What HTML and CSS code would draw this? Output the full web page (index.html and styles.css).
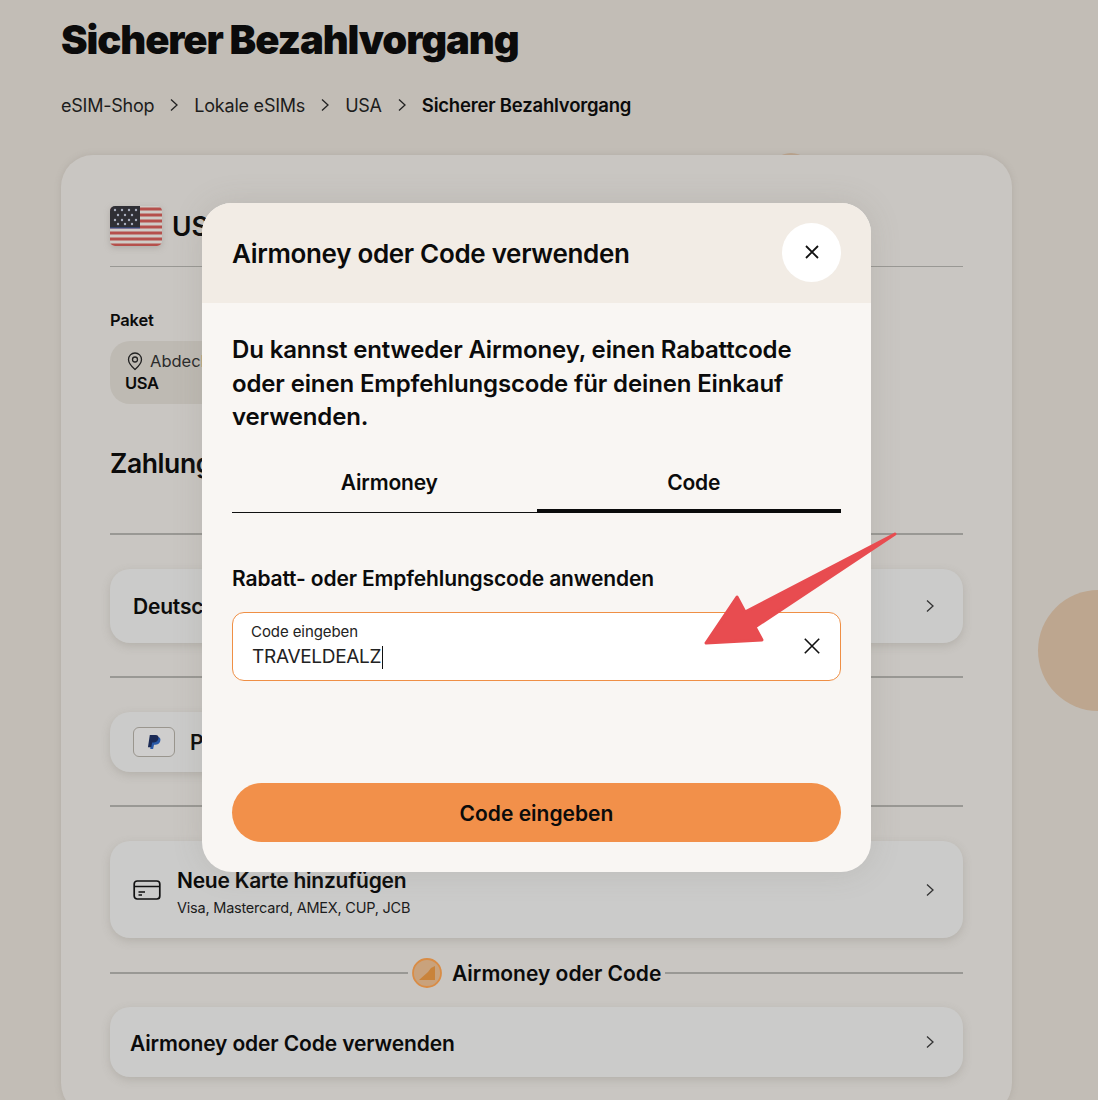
FILE: index.html
```html
<!DOCTYPE html>
<html lang="de">
<head>
<meta charset="utf-8">
<title>Sicherer Bezahlvorgang</title>
<link rel="stylesheet" href="styles.css">
</head>
<body>
<div class="blob"></div>
<div class="blob-top"></div>
<main class="page">
  <h1 class="title">Sicherer Bezahlvorgang</h1>
  <nav class="crumbs">
    <span>eSIM-Shop</span>
    <svg class="crumb-sep" viewBox="0 0 10 14"><path d="M2 1.500 8 7l-6 5.500"/></svg>
    <span>Lokale eSIMs</span>
    <svg class="crumb-sep" viewBox="0 0 10 14"><path d="M2 1.500 8 7l-6 5.500"/></svg>
    <span>USA</span>
    <svg class="crumb-sep" viewBox="0 0 10 14"><path d="M2 1.500 8 7l-6 5.500"/></svg>
    <strong>Sicherer Bezahlvorgang</strong>
  </nav>
  <section class="card">
    <div class="head-row">
      <svg class="flag" viewBox="0 0 52 40">
        <defs><clipPath id="fc"><rect width="52" height="40" rx="5"/></clipPath></defs>
        <g clip-path="url(#fc)">
          <rect width="52" height="40" fill="#cfccc7"/>
          <path d="M0 3h52M0 9h52M0 15h52M0 21h52M0 27h52M0 33h52M0 39h52" stroke="#b5504c" stroke-width="3"/>
          <rect width="30" height="22" fill="#2f2f35"/>
          <path d="M0 22h30" stroke="#3b5ca8" stroke-width="1"/>
          <g fill="#aab0c0">
            <circle cx="5" cy="4" r="1.200"/><circle cx="12" cy="4" r="1.200"/><circle cx="19" cy="4" r="1.200"/><circle cx="26" cy="4" r="1.200"/>
            <circle cx="8" cy="9" r="1.200"/><circle cx="15" cy="9" r="1.200"/><circle cx="22" cy="9" r="1.200"/>
            <circle cx="5" cy="14" r="1.200"/><circle cx="12" cy="14" r="1.200"/><circle cx="19" cy="14" r="1.200"/><circle cx="26" cy="14" r="1.200"/>
            <circle cx="8" cy="18" r="1.200"/><circle cx="15" cy="18" r="1.200"/><circle cx="22" cy="18" r="1.200"/>
          </g>
        </g>
      </svg>
      <span class="head-name">USA</span>
    </div>
    <hr class="rule head-rule">
    <div class="paket-label">Paket</div>
    <div class="pill">
      <div class="pill-top">
        <svg class="pin" viewBox="0 0 18 20"><path d="M9 18.500C5 15 2.500 11.800 2.500 8.500a6.500 6.500 0 0 1 13 0c0 3.300-2.500 6.500-6.500 10Z"/><circle cx="9" cy="8.500" r="2.500"/></svg>
        <span>Abdeckung</span>
      </div>
      <strong>USA</strong>
    </div>
    <h2 class="pay-title">Zahlungsmethode</h2>
    <hr class="rule pay-rule">
    <div class="row row-de"><strong class="row-strong">Deutsche Kreditkarte</strong>
      <svg class="chev" viewBox="0 0 10 14"><path d="M2 1.500 8 7l-6 5.500"/></svg></div>
    <hr class="rule gap-rule">
    <div class="row row-pp">
      <span class="pp-box">
        <svg viewBox="0 0 16 18" class="pp"><path fill="#2a5aa8" d="M5 3h6c3 0 4 2 3 5-.8 2.500-3 3.500-5 3.500H7.500L6.500 16H3.500Z"/><path fill="#1b2a55" d="M3 1h6c3 0 4 2 3 4.500C11.200 8 9 9 7 9H5.500L4.500 14H1Z"/></svg>
      </span>
      <strong class="row-strong">PayPal</strong>
    </div>
    <hr class="rule gap-rule">
    <div class="row row-card">
      <svg class="cc" viewBox="0 0 28 22"><rect x="1.200" y="2" width="25.600" height="18" rx="3"/><path d="M1.200 7.500h25.600M5.500 13h6.500M5.500 16h3.500"/></svg>
      <div class="card-text">
        <strong class="card-title">Neue Karte hinzufügen</strong>
        <div class="card-sub">Visa, Mastercard, AMEX, CUP, JCB</div>
      </div>
      <svg class="chev" viewBox="0 0 10 14"><path d="M2 1.500 8 7l-6 5.500"/></svg>
    </div>
    <div class="divider">
      <span class="divider-line"></span>
      <svg class="coin" viewBox="0 0 30 30"><circle cx="15" cy="15" r="14" fill="#c9a27c" stroke="#d98c45" stroke-width="1.800"/><path d="M7 22 16 14 19 10 23 8v14Z" fill="#c9833a"/></svg>
      <strong class="divider-text">Airmoney oder Code</strong>
      <span class="divider-line short"></span>
    </div>
    <div class="row row-air"><strong class="air-text">Airmoney oder Code verwenden</strong>
      <svg class="chev" viewBox="0 0 10 14"><path d="M2 1.500 8 7l-6 5.500"/></svg></div>
  </section>
</main>

<div class="modal">
  <header class="modal-head">
    <h2>Airmoney oder Code verwenden</h2>
    <button class="close"><svg viewBox="0 0 16 16"><path d="M2 2l12 12M14 2 2 14"/></svg></button>
  </header>
  <div class="modal-body">
    <p class="lead">Du kannst entweder Airmoney, einen Rabattcode oder einen Empfehlungscode für deinen Einkauf verwenden.</p>
    <div class="tabs">
      <div class="tab">Airmoney</div>
      <div class="tab active">Code</div>
    </div>
    <div class="field-title">Rabatt- oder Empfehlungscode anwenden</div>
    <div class="field">
      <div class="field-inner">
        <div class="field-label">Code eingeben</div>
        <div class="field-value">TRAVELDEALZ<span class="caret"></span></div>
      </div>
      <svg class="clear" viewBox="0 0 20 20"><path d="M2 2l16 16M18 2 2 18"/></svg>
    </div>
    <button class="submit">Code eingeben</button>
  </div>
</div>

<svg class="arrow" viewBox="0 0 1098 1100"><path d="M895 534 745 612 737 597 706 643 762 640 755 627Z" fill="#e84c50" stroke="#e84c50" stroke-width="3" stroke-linejoin="round"/></svg>
</body>
</html>
```
FILE: styles.css
```css
* { box-sizing: border-box; }
html, body { margin: 0; height: 1100px; overflow: hidden; }
body {
  background: #c2bdb6;
  font-family: Inter, "Liberation Sans", sans-serif;
  color: #0b0b0b;
  position: relative;
}
.blob {
  position: absolute;
  left: 1038px;
  top: 590px;
  width: 121px;
  height: 121px;
  border-radius: 50%;
  background: #bda68f;
}
.blob-top {
  position: absolute;
  left: 770px;
  top: 153px;
  width: 42px;
  height: 42px;
  border-radius: 50%;
  background: #bda68f;
}
.page { padding: 14px 0 0 61px; width: 1098px; position: relative; }
.title {
  margin: 0;
  font-size: 40px;
  line-height: 52px;
  font-weight: 900;
  letter-spacing: -1.1px;
}
.crumbs {
  display: flex;
  align-items: center;
  margin-top: 26px;
  height: 26px;
  font-size: 18px;
  letter-spacing: -0.23px;
  color: #1c1c1c;
}
.crumbs strong { font-size: 18.500px; letter-spacing: -0.2px; font-weight: 600; color: #0b0b0b; }
.crumb-sep {
  width: 10px;
  height: 14px;
  margin: 0 15px;
  fill: none;
  stroke: #222;
  stroke-width: 1.300;
}
.card {
  margin-top: 37px;
  background: #c9c6c2;
  border-radius: 32px;
  padding: 49px 49px 0;
  height: 960px;
  width: 951px;
  box-shadow: 0 0 6px rgba(130, 125, 115, 0.25);
}
.head-row { display: flex; align-items: center; height: 43px; gap: 10px; }
.flag { width: 52px; height: 40px; filter: drop-shadow(0 2px 3px rgba(120, 114, 105, 0.3)); }
.head-name { font-size: 26.500px; font-weight: 600; }
.rule { border: 0; height: 2px; background: #999894; margin: 0; }
.head-rule { height: 1px; margin-top: 19px; }
.paket-label { margin-top: 43px; font-size: 16.500px; font-weight: 600; line-height: 20px; letter-spacing: -0.2px; }
.pill {
  margin-top: 11px;
  width: 93px;
  height: 63px;
  overflow: hidden;
  border-radius: 20px 0 0 20px;
  background: #bebab3;
  padding: 9px 0 9px 15px;
  font-size: 16.500px;
}
.pill-top { display: flex; align-items: center; gap: 6px; margin-left: 1px; color: #2b2b2b; height: 21px; white-space: nowrap; }
.pill strong { font-weight: 600; display: block; line-height: 25px; letter-spacing: -0.3px; }
.pin { width: 18px; height: 20px; fill: none; stroke: #222; stroke-width: 1.300; flex: none; }
.pay-title { margin: 41px 0 0; font-size: 26.500px; line-height: 36px; font-weight: 600; letter-spacing: -0.4px; }
.pay-rule { margin-top: 52px; }
.gap-rule { margin-top: 33px; }
.row {
  display: flex;
  align-items: center;
  background: #cbcbca;
  border-radius: 20px;
  box-shadow: 0 3px 8px rgba(120, 114, 105, 0.25);
}
.row-de { margin-top: 34px; height: 74px; padding: 0 28px 0 23px; justify-content: space-between; }
.row-pp { margin-top: 34px; height: 60px; width: 400px; padding: 0 23px; gap: 15px; }
.row-card { margin-top: 34px; height: 97px; padding: 0 28px 0 23px; gap: 16px; }
.card-text { flex: 1; padding-top: 6px; }
.row-air { margin-top: 17px; height: 70px; padding: 0 28px 0 20px; justify-content: space-between; }
.row-strong { font-size: 21px; font-weight: 600; letter-spacing: -0.2px; }
.pp-box {
  width: 42px;
  height: 30px;
  border: 1px solid #9a968e;
  border-radius: 6px;
  display: flex;
  align-items: center;
  justify-content: center;
  background: #cfcecd;
}
.pp { width: 15px; height: 17px; }
.cc { width: 28px; height: 22px; fill: none; stroke: #111; stroke-width: 1.700; flex: none; }
.card-title { display: block; font-size: 21px; font-weight: 600; line-height: 28px; letter-spacing: -0.26px; }
.card-sub { font-size: 14.500px; line-height: 22px; margin-top: 2px; letter-spacing: -0.22px; color: #1c1c1c; }
.chev { width: 10px; height: 14px; fill: none; stroke: #333; stroke-width: 1.300; flex: none; }
.divider { display: flex; align-items: center; margin-top: 17px; height: 35px; }
.divider-line { flex: 1; height: 2px; background: #999894; }
.divider-line.short { flex: 0 0 298px; margin-left: 4px; }
.coin { width: 30px; height: 30px; margin: 0 10px 0 4px; flex: none; }
.divider-text { font-size: 21px; line-height: 30px; padding-top: 3px; font-weight: 600; white-space: nowrap; width: 209px; }
.air-text { font-size: 21px; line-height: 30px; padding-top: 3px; font-weight: 600; letter-spacing: -0.13px; }

.modal {
  position: absolute;
  left: 202px;
  top: 203px;
  width: 669px;
  height: 669px;
  border-radius: 30px;
  overflow: hidden;
  background: #f9f6f3;
  box-shadow: 0 0 30px rgba(120, 114, 105, 0.18);
}
.modal-head {
  height: 100px;
  background: #f2ece5;
  display: flex;
  align-items: center;
  justify-content: space-between;
  padding: 0 30px;
}
.modal-head h2 { margin: 0; padding-top: 1px; font-size: 26px; font-weight: 600; letter-spacing: -0.32px; }
.close {
  width: 59px;
  height: 59px;
  margin-bottom: 2px;
  border: 0;
  border-radius: 50%;
  background: #fff;
  display: flex;
  align-items: center;
  justify-content: center;
  padding: 0;
}
.close svg { width: 16px; height: 16px; fill: none; stroke: #111; stroke-width: 1.800; }
.modal-body { padding: 30px 30px 0; }
.lead { margin: 0; font-size: 24px; line-height: 33.500px; font-weight: 600; letter-spacing: -0.14px; }
.tabs { display: flex; margin-top: 16px; }
.tab {
  flex: 1;
  height: 63px;
  padding: 18px 0 0 10px;
  text-align: center;
  font-size: 21px;
  line-height: 30px;
  font-weight: 600;
  letter-spacing: -0.15px;
  border-bottom: 1px solid #111;
}
.tab.active { border-bottom: 4px solid #0b0b0b; }
.field-title { margin-top: 51px; font-size: 21px; line-height: 30px; font-weight: 600; letter-spacing: -0.14px; }
.field {
  margin-top: 18px;
  height: 69px;
  background: #fff;
  border: 1px solid #ef8f45;
  border-radius: 12px;
  display: flex;
  align-items: center;
  justify-content: space-between;
  padding: 0 19px 0 18px;
}
.field-label { font-size: 15px; line-height: 20px; letter-spacing: -0.08px; color: #222; }
.field-value { font-size: 19px; line-height: 26px; color: #222; letter-spacing: -0.3px; margin-top: 2px; padding-left: 1px; display: flex; align-items: center; }
.caret { width: 1px; height: 23px; background: #111; margin-left: 1px; }
.clear { width: 18px; height: 18px; fill: none; stroke: #111; stroke-width: 1.800; }
.submit {
  display: block;
  width: 100%;
  height: 59px;
  margin-top: 102px;
  padding: 2px 0 0;
  border: 0;
  border-radius: 30px;
  background: #f2904a;
  color: #0b0b0b;
  font: 600 21px Inter, "Liberation Sans", sans-serif;
}
.arrow { position: absolute; left: 0; top: 0; width: 1098px; height: 1100px; pointer-events: none; }
```
